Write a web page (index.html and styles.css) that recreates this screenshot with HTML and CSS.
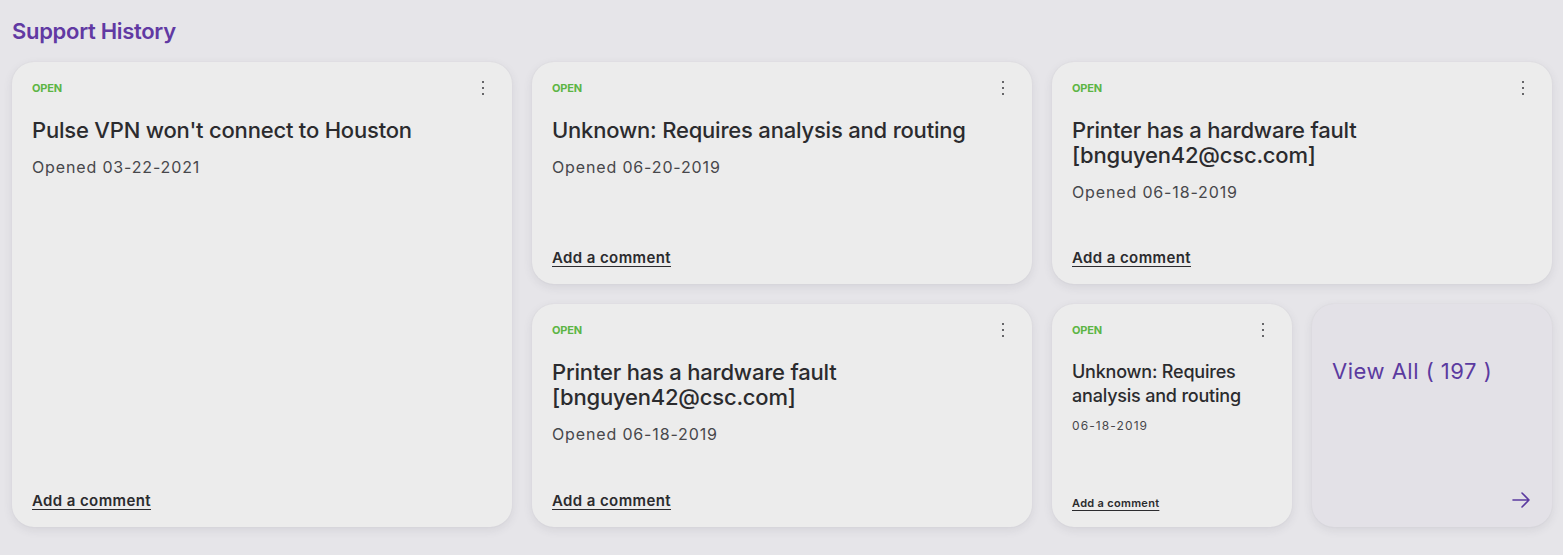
FILE: index.html
```html
<!DOCTYPE html>
<html lang="en">
<head>
<meta charset="utf-8">
<title>Support History</title>
<link rel="stylesheet" href="styles.css">
</head>
<body>
<section class="support">
  <h2 class="support-title">Support History</h2>
  <div class="grid">
    <article class="card card-tall">
      <div class="card-head">
        <span class="status">OPEN</span>
        <span class="kebab" aria-label="More"><i></i><i></i><i></i></span>
      </div>
      <h3 class="card-title">Pulse VPN won't connect to Houston</h3>
      <p class="card-date">Opened 03-22-2021</p>
      <a class="comment" href="#">Add a comment</a>
    </article>
    <article class="card">
      <div class="card-head">
        <span class="status">OPEN</span>
        <span class="kebab" aria-label="More"><i></i><i></i><i></i></span>
      </div>
      <h3 class="card-title">Unknown: Requires analysis and routing</h3>
      <p class="card-date">Opened 06-20-2019</p>
      <a class="comment" href="#">Add a comment</a>
    </article>
    <article class="card card-wide">
      <div class="card-head">
        <span class="status">OPEN</span>
        <span class="kebab" aria-label="More"><i></i><i></i><i></i></span>
      </div>
      <h3 class="card-title">Printer has a hardware fault<br>[bnguyen42@csc.com]</h3>
      <p class="card-date">Opened 06-18-2019</p>
      <a class="comment" href="#">Add a comment</a>
    </article>
    <article class="card">
      <div class="card-head">
        <span class="status">OPEN</span>
        <span class="kebab" aria-label="More"><i></i><i></i><i></i></span>
      </div>
      <h3 class="card-title">Printer has a hardware fault<br>[bnguyen42@csc.com]</h3>
      <p class="card-date">Opened 06-18-2019</p>
      <a class="comment" href="#">Add a comment</a>
    </article>
    <article class="card card-small">
      <div class="card-head">
        <span class="status">OPEN</span>
        <span class="kebab" aria-label="More"><i></i><i></i><i></i></span>
      </div>
      <h3 class="card-title">Unknown: Requires analysis and routing</h3>
      <p class="card-date">06-18-2019</p>
      <a class="comment" href="#">Add a comment</a>
    </article>
    <a class="card card-viewall" href="#">
      <span class="viewall-text">View All ( 197 )</span>
      <svg class="viewall-arrow" width="20" height="18" viewBox="0 0 20 18" fill="none" stroke="currentColor" stroke-width="1.6" stroke-linecap="round" stroke-linejoin="round">
        <path d="M2 9 H18 M11 2 L18 9 L11 16"/>
      </svg>
    </a>
  </div>
</section>
</body>
</html>
```

FILE: styles.css
```css
* { box-sizing: border-box; }

html, body {
  margin: 0;
  padding: 0;
  background: #e6e5e9;
}

body {
  font-family: Inter, "Noto Sans", "Liberation Sans", sans-serif;
  color: #2b2b2e;
}

.support {
  padding: 17px 11px 28px 12px;
}

.support-title {
  margin: 0 0 17px 0;
  font-size: 22px;
  line-height: 28px;
  font-weight: 600;
  color: #6139a3;
  letter-spacing: -0.3px;
}

.grid {
  display: grid;
  grid-template-columns: 500px 500px 240px 240px;
  grid-template-rows: 222px 223px;
  gap: 20px;
}

.card {
  background: #ececec;
  border-radius: 22px;
  box-shadow: 0 3px 10px rgba(60, 55, 75, 0.10), 0 0 2px rgba(60, 55, 75, 0.06);
  padding: 19px 20px 16px 20px;
  display: flex;
  flex-direction: column;
}

.card-tall { grid-row: 1 / span 2; }
.card-wide { grid-column: 3 / span 2; }

.card-head {
  display: flex;
  justify-content: space-between;
  align-items: center;
  height: 14px;
}

.status {
  font-size: 11px;
  line-height: 14px;
  font-weight: 700;
  color: #5cb544;
  letter-spacing: -0.2px;
}

.kebab {
  display: flex;
  flex-direction: column;
  align-items: center;
  gap: 3.5px;
  width: 4px;
  margin-right: 7px;
}

.kebab i {
  display: block;
  width: 2.4px;
  height: 2.4px;
  border-radius: 50%;
  background: #3a3a3e;
}

.card-title {
  margin: 23px 0 0 0;
  font-size: 22px;
  line-height: 25px;
  font-weight: 500;
  color: #2b2b2e;
  letter-spacing: -0.2px;
}

.card-date {
  margin: 13px 0 0 0;
  font-size: 16px;
  line-height: 22px;
  font-weight: 400;
  color: #47474b;
  letter-spacing: 0.85px;
}

.comment {
  margin-top: auto;
  font-size: 15px;
  line-height: 20px;
  font-weight: 600;
  color: #2b2b2e;
  text-decoration: underline;
  text-underline-offset: 3px;
  text-decoration-thickness: 1px;
  letter-spacing: 0.4px;
  align-self: flex-start;
}

.card-small .card-title {
  margin-top: 23px;
  font-size: 18px;
  line-height: 24px;
}

.card-small .card-date {
  margin-top: 10px;
  font-size: 12px;
  line-height: 16px;
  letter-spacing: 1.1px;
}

.card-small .comment {
  font-size: 11px;
  line-height: 14px;
  letter-spacing: 0.3px;
  margin-bottom: 1px;
}

.card-viewall {
  background: #e3e1e7;
  text-decoration: none;
  color: #5b3aa0;
  padding: 54px 20px 16px 20px;
  justify-content: space-between;
}

.viewall-text {
  font-size: 22px;
  line-height: 26px;
  font-weight: 400;
  color: #5b3aa0;
  letter-spacing: 0.5px;
}

.viewall-arrow {
  align-self: flex-end;
  color: #5b3aa0;
  margin-right: 1px;
  margin-bottom: 2px;
}
```
